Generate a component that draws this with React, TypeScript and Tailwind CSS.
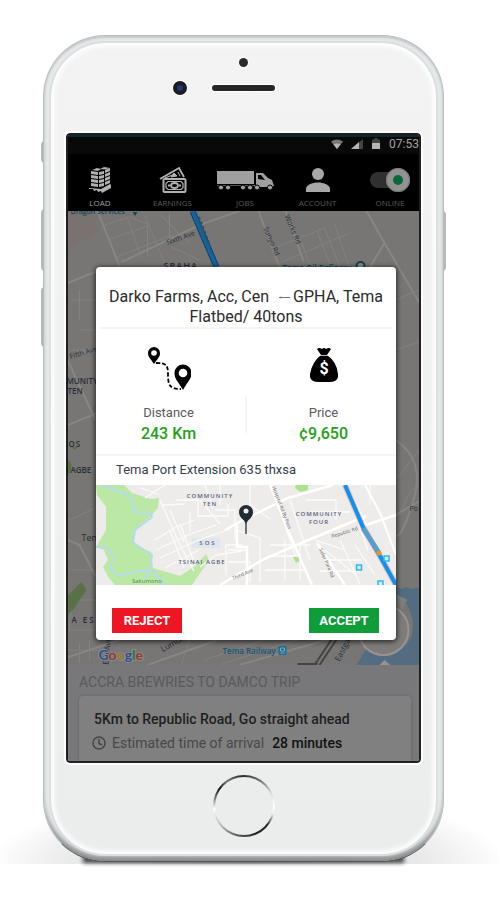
import type { ReactNode } from "react";

function LoadIcon() {
  return (
    <svg width="24" height="26" viewBox="0 0 24 26" fill="#b0b0b0" aria-hidden="true">
      {[3, 7, 11, 15].map((y) => (
        <g key={y}>
          <path d={`M3 ${y + 1}l7 1v3l-7 -1z`} />
          <path d={`M11 ${y + 2}l5 -1v3l-5 1z`} />
          <path d={`M17 ${y}l5 -2v3l-5 2z`} />
        </g>
      ))}
      <path d="M4 3l5-2 4 1-3 2zM12 2l4-2 6 1-5 1.600z" />
      <path d="M1 21l12 1 9-5 1 1v3l-9 5-1-2-3 1-1-2-3 1-1-2-4 0z" />
    </svg>
  );
}

function EarningsIcon() {
  return (
    <svg width="28" height="26" viewBox="0 0 28 26" fill="none" stroke="#b0b0b0" aria-hidden="true">
      <path d="M1 12L20 1l5 9" strokeWidth="1.800" />
      <path d="M6 11l10-4" strokeWidth="1.300" />
      <path d="M12 10l3-4 3 3zM19 5l2 4" fill="#b0b0b0" />
      <rect x="4.500" y="12" width="22" height="13" rx="1" strokeWidth="2" />
      <path d="M9 14.500h13l2 2v4l-2 2H9l-2-2v-4z" strokeWidth="1.200" />
      <ellipse cx="15.500" cy="18.500" rx="3.500" ry="2.500" strokeWidth="1.800" />
      <path d="M9 18.500h2M20 18.500h2" strokeWidth="2" />
    </svg>
  );
}

function TruckIcon() {
  return (
    <svg width="58" height="22" viewBox="0 0 58 22" fill="#a0a0a0" aria-hidden="true">
      <path d="M1 2h37v13H1z" />
      <path d="M1 16h37v1H1z" fill="#555" />
      <path d="M40 4h7l5 5 4 2 2 6-4 1H40zM42 6v4l7 1-4-5z" fillRule="evenodd" />
      <path d="M38 16h19v2H38z" />
      {[5, 12, 27, 34, 41, 54].map((x) => (
        <circle key={x} cx={x} cy="18.500" r="2.500" stroke="#000" />
      ))}
    </svg>
  );
}

function AccountIcon() {
  return (
    <svg width="24" height="26" viewBox="0 0 24 26" fill="#a8a8a8" aria-hidden="true">
      <circle cx="12" cy="7" r="6" />
      <path d="M0 25v-3c0-4 6-6.500 12-6.500S24 18 24 22v3z" />
    </svg>
  );
}

function StatusBar() {
  return (
    <div className="flex h-[19px] items-center justify-end border-t-2 border-[#0c2a2d] bg-[#090909] pb-1 text-[12px] leading-3 text-[#a3a3a3]">
      <svg className="mr-2" width="12" height="10" viewBox="0 0 12 10" aria-hidden="true">
        <path d="M0 2.500Q6-1.500 12 2.500L6 10z" fill="#777" />
        <path d="M2.500 5.500Q6 3.500 9.500 5.500L6 10z" fill="#b5b5b5" />
      </svg>
      <svg className="mr-[9px]" width="12" height="10" viewBox="0 0 12 10" aria-hidden="true">
        <path d="M0 10L12 0v10z" fill="#444" />
        <path d="M0 10l8-7v7z" fill="#b5b5b5" />
      </svg>
      <svg className="mr-[9px]" width="8" height="11" viewBox="0 0 8 11" aria-hidden="true">
        <path d="M0 1.500h2.500V0h3v1.500H8V11H0z" fill="#444" />
        <path d="M0 5h8v6H0z" fill="#b5b5b5" />
      </svg>
      <span>07:53</span>
    </div>
  );
}

function NavItem({ label, active, children }: { label: string; active?: boolean; children: ReactNode }) {
  return (
    <button type="button" className="flex w-[58px] flex-col items-center">
      <span className="flex h-[28px] items-center">{children}</span>
      <span className={`mt-1 text-[8px] leading-[10px] ${active ? "text-[#a0a0a0]" : "text-[#5c5c5c]"}`}>{label}</span>
    </button>
  );
}

function NavBar() {
  return (
    <nav className="flex h-[57px] items-start justify-between bg-black pt-3 pl-[3px] font-['Open_Sans',sans-serif]">
      <NavItem label="LOAD" active>
        <LoadIcon />
      </NavItem>
      <NavItem label="EARNINGS">
        <EarningsIcon />
      </NavItem>
      <NavItem label="JOBS">
        <TruckIcon />
      </NavItem>
      <NavItem label="ACCOUNT">
        <AccountIcon />
      </NavItem>
      <label className="flex w-[58px] flex-col items-center">
        <span className="flex h-[28px] items-center">
          <input
            type="checkbox"
            role="switch"
            defaultChecked
            className="flex h-4 w-[40px] appearance-none items-center justify-end rounded-full bg-[#303030] before:block before:size-6 before:rounded-full before:border-[7px] before:border-[#929292] before:bg-[#066a38] before:outline-1 before:-outline-offset-1 before:outline-[#757575]"
          />
        </span>
        <span className="mt-1 text-[8px] leading-[10px] text-[#5c5c5c]">ONLINE</span>
      </label>
    </nav>
  );
}

function CityMap() {
  return (
    <svg
      className="block h-[454px] w-full"
      viewBox="68 211 352 454"
      preserveAspectRatio="xMidYMid slice"
      fontFamily="'Open Sans', sans-serif"
      role="img"
      aria-label="Map of Tema"
    >
      <path d="M60 200h370v480H60z" fill="#777674" />
      <path d="M68 211h25l6 20-31 20z" fill="#7a7270" />
      <g fill="none" stroke="#838281" strokeWidth="1">
        <path d="M105 225l25-8 20 8M108 240l40-14v30M128 218l14 40M115 258l60-24M145 215l20 48M160 214l30 30M170 212v34l30 14M80 330h16v22H76M72 300h24M80 290v30M70 350h26M70 520l26-12M72 600h24v30H70z" />
        <path d="M275 248l50-20 15 38M282 262l66-28M300 238l12 30M318 232l14 36M335 224l14 42M396 300l24-10M396 350l24-8M396 480l24-30M396 520l16-30 8-4M70 570h26v24M120 645l-10 20M190 640l-8 25M205 660l60-20M220 665l80-26M80 643v20M90 640v20M68 650h40" />
      </g>
      <g fill="none" stroke="#868684" strokeWidth="2">
        <path d="M98 211l22 55M122 262l78-37 40-14M68 283l30-12M259 211l14 38 8 20M286 211l18 50M367 211l18 32-15 25M385 243l35 60M68 360l28 60M68 425l30-12M68 540l12 5 18 35M396 440q30 20 18 60t-18 35M396 515l24-14M60 660l60-20M148 665l70-25M240 665l90-26" />
      </g>
      <path d="M193 211l24 56" stroke="#1c3f64" strokeWidth="6" />
      <path d="M193 211l24 56" stroke="#0f659d" strokeWidth="4" />
      <path d="M199 217l10 26" stroke="#31505e" strokeWidth="3" strokeDasharray="3 2" />
      <path d="M338 638l-18 27M333 638l-18 27M298 664h20" stroke="#444" strokeWidth="2" fill="none" />
      <path d="M396 586l5 3 6-2 5 2 8-2v80H356l12-20q20 14 38-2 14-14 2-40l-12-8z" fill="#536c80" />
      <path d="M396 594l12 6-6 10z" fill="#7e7e7c" />
      <circle cx="384" cy="630" r="25" fill="#7d7c7a" stroke="#99938d" strokeWidth="2" />
      <path d="M380 665l5-5 6 5z" fill="#9a9184" />
      <path d="M68 596l14-14 5 8-12 18-7 7z" fill="#587146" />
      <path d="M68 459l4 5-1 8-3 3zM72 447h6l-3 3z" fill="#547144" />
      <g fill="#272f3c" fontSize="8">
        <text x="164" y="269" fontWeight="600" fontSize="9" letterSpacing="1">SRAHA</text>
        <text x="168" y="245" transform="rotate(-20 168 245)" fontSize="7">Sixth Ave</text>
        <text x="264" y="228" transform="rotate(67 264 228)" fontSize="7">Sunyo Rd</text>
        <text x="285" y="216" transform="rotate(67 285 216)" fontSize="7">Works Rd</text>
        <text x="71" y="359" transform="rotate(-17 71 359)" fontSize="7">Fifth Ave</text>
        <text x="67" y="384" fontWeight="600">MUNITY</text>
        <text x="68" y="394" fontWeight="600">TEN</text>
        <text x="69" y="447" letterSpacing="1" fontWeight="600">OS</text>
        <text x="71" y="473" fontWeight="600">AGBE</text>
        <text x="82" y="541" fontSize="9">Tema</text>
        <text x="72" y="623" letterSpacing="2" fontWeight="600">A ES</text>
        <text x="410" y="511" fontSize="7">Po</text>
        <text x="163" y="652" transform="rotate(-28 163 652)">Lumumba Rd</text>
        <text x="340" y="662" transform="rotate(-63 340 662)">Eastgate</text>
        <text x="109" y="665" transform="rotate(-85 109 665)">Eth Ave</text>
      </g>
      <g fill="#0b4959" fontWeight="600">
        <text x="71" y="214" fontSize="7">Dragon Services</text>
        <path d="M133 212h5l-2.500 4z" />
        <text x="283" y="271" fontSize="8">Tema Oil Refinery</text>
        <circle cx="361" cy="266" r="4" fill="#8a8f90" stroke="#173d50" strokeWidth="2" />
        <text x="223" y="654" fontSize="8" fill="#14597c">Tema Railway</text>
        <rect x="279" y="646" width="8" height="9" rx="1" fill="#1a6f9c" />
        <path d="M281 648h4v3h-4zM281 653h4" fill="none" stroke="#8aa3ad" />
      </g>
      <text x="99" y="660" fontFamily="Lato, sans-serif" fontSize="14" fontWeight="700" stroke="#8a8a8a" strokeWidth="2" paintOrder="stroke">
        <tspan fill="#2d4f96">G</tspan>
        <tspan fill="#95372f">o</tspan>
        <tspan fill="#92772a">o</tspan>
        <tspan fill="#2d4f96">g</tspan>
        <tspan fill="#2b7543">l</tspan>
        <tspan fill="#95372f">e</tspan>
      </text>
    </svg>
  );
}

function DestinationMap() {
  return (
    <svg
      className="block h-[100px] w-full"
      viewBox="96 485 300 100"
      preserveAspectRatio="xMidYMid slice"
      fontFamily="'Open Sans', sans-serif"
      role="img"
      aria-label="Map of the destination"
    >
      <path d="M90 480h310v110H90z" fill="#eeecea" />
      <path
        d="M96 485H124L132 493L151 499L159 498L158 508L150 517L134 530L133 540L136 545L151 552L153 568L180 576L195 566L206 554L209 560L192 585H115L108 577L103 567L108 560L104 550L96 547L106 530V507L97 495Z"
        fill="#bbe8a5"
      />
      <path d="M296 485h12v5l-8 2-5-4zM293 557l5-2 2 6-4 2zM213 545h4l-2 3z" fill="#a9e58f" />
      <path d="M192 538h28v10h-28z" fill="#e0e6ef" />
      <path d="M101 485l20 7 10 6 4 14 16 1 1 4-17 13-2 12 12 9 7 4-2 14-5 10M96 547l12 1 5 8-2 14 8 6 20-5 14 0 12 14" fill="none" stroke="#b5dceb" strokeWidth="2" />
      <g fill="none" stroke="#fbfbfa" strokeWidth="1.300">
        <path d="M140 488l18 6M145 498l20-13M163 505l22-1M160 500l20 45 14 26M170 510l14 32M155 540l19-12 20-8M156 550l32-15 28-10M160 558l36-17 34-12M165 568l34-18M200 567l16-12 26-4M170 530l14 38M180 524l14 38M190 512v20M200 500l20 24M176 500h22v16h30v-12M215 510h20v30M205 485l8 24M220 485v20M228 550h20M228 562h22v20M250 485v20l20 14M236 530l24 8v44M242 545h-16v30" />
        <path d="M275 495l20 60M290 500l20 60M306 500h30v20M310 512h40M315 540l30 10M325 550l30 24M340 540l20 44M355 545l20 30M270 545h40M268 556h30M265 570h40M285 540v40M300 545v35M350 500l18 50M370 485v20M325 560h36M320 571h40" />
      </g>
      <g fill="none" stroke="#fff" strokeWidth="2.500">
        <path d="M225 530l18-10 45-22 45-13M237 525v22h10v38M270 485l20 50 22 50M220 585l44-26 42-18 60-25M317 543l20 30 8 12M346 485l20 40 30-10" />
        <path d="M365 485l15 28 16 42" strokeWidth="2" />
      </g>
      <path d="M345 485l18 42 17 29 16 29" fill="none" stroke="#eb9562" strokeWidth="6" opacity=".5" />
      <path d="M345 485l18 42 17 29 16 29" fill="none" stroke="#0d91f5" strokeWidth="4" />
      <path d="M363 528l16 25" stroke="#579ed0" strokeWidth="5" />
      <circle cx="379" cy="553" r="2.500" fill="#e29730" />
      <g fill="#c8f1ff" stroke="#2fb4f5" strokeWidth="1.500">
        <rect x="356.500" y="565" width="5" height="5" />
        <rect x="384" y="556" width="5" height="5" />
        <rect x="378" y="581" width="5" height="5" />
      </g>
      <g fill="#53627a" fontSize="6" fontWeight="600" textAnchor="middle" letterSpacing="1">
        <text x="210" y="498">COMMUNITY</text>
        <text x="210" y="506">TEN</text>
        <text x="208" y="545" letterSpacing="2">SOS</text>
        <text x="202" y="564">TSINAI AGBE</text>
        <text x="319" y="516">COMMUNITY</text>
        <text x="319" y="524">FOUR</text>
      </g>
      <g fill="#666" fontSize="5">
        <text x="132" y="583" fontSize="6" fill="#56845a">Sakumono</text>
        <text x="233" y="580" transform="rotate(-22 233 580)">Third Ave</text>
        <text x="332" y="538" transform="rotate(-17 332 538)">Republic Rd</text>
        <text x="319" y="549" transform="rotate(67 319 549)">Safer Park Rd</text>
        <text x="272" y="487" transform="rotate(69 272 487)">Hospital Rd By Pass</text>
      </g>
      <path d="M246 534v-16" stroke="#26323a" strokeWidth="1.300" />
      <path d="M246 524c-2-5-7-6-7-12a7 7 0 0 1 14 0c0 6-5 7-7 12z" fill="#202c34" />
      <circle cx="246" cy="511" r="2.500" fill="#eee" />
    </svg>
  );
}

function RouteIcon() {
  return (
    <svg width="44" height="46" viewBox="147 345 44 46" aria-hidden="true">
      <path d="M154 364c-4-6-6-7-6-11a6 6 0 0 1 12 0c0 4-2 5-6 11zM183 390c-5-9-8.500-11-8.500-17a8.500 8.500 0 0 1 17 0c0 6-3.500 8-8.500 17z" />
      <circle cx="154" cy="353" r="2.800" fill="#fff" />
      <circle cx="183" cy="373" r="4.300" fill="#fff" />
      <path d="M156 363c10 0 12 2 12 11 0 12 2 15 13 15" fill="none" stroke="#000" strokeWidth="1.800" strokeDasharray="4 2" />
    </svg>
  );
}

function MoneyBagIcon() {
  return (
    <svg width="28" height="42" viewBox="0 0 28 42" aria-hidden="true">
      <path d="M7 2q2-2 5 0 2-2 4 0 3-2 5 0l-4 6q10 7 11 19 1 8-9 8H9Q-1 35 0 27 2 15 11 8z" />
      <path d="M10 8.500h8" stroke="#fff" strokeWidth=".7" />
      <text x="14" y="27" textAnchor="middle" fill="#fff" fontFamily="Roboto, sans-serif" fontSize="16" fontWeight="700">
        $
      </text>
    </svg>
  );
}

function Stat({ label, value, icon }: { label: string; value: string; icon: ReactNode }) {
  return (
    <div className="flex flex-1 flex-col items-center">
      <div className="flex h-[48px] items-center">{icon}</div>
      <p className="mt-[11px] text-[13px] leading-5 text-[#575b62]">{label}</p>
      <p className="text-[16px] leading-[22px] font-medium text-[#22a016]">{value}</p>
    </div>
  );
}

function OfferDialog() {
  return (
    <section
      role="dialog"
      aria-label="Trip offer"
      className="absolute top-[132px] right-[23px] left-[28px] overflow-hidden rounded-[4px] bg-white shadow-[0_1px_5px_1px_rgba(0,0,0,0.65)]"
    >
      <h1 className="mx-1 border-b-2 border-[#f4f4f4] pt-5 text-center text-[16px] leading-5 text-[#2b2b2b]">
        <span className="inline-flex items-center">
          Darko Farms, Acc, Cen
          <svg className="mr-[3px] ml-[10px]" width="11" height="5" viewBox="0 0 11 5" fill="none" stroke="#777" aria-hidden="true">
            <path d="M0 2.500h11M2 1.500v2" />
          </svg>
          GPHA, Tema
        </span>
        <br />
        Flatbed/ 40tons
      </h1>
      <div className="flex items-end border-b-2 border-[#f5f5f5] pt-[15px] pb-[9px]">
        <Stat label="Distance" value="243 Km" icon={<RouteIcon />} />
        <div className="mx-1 mb-3 h-[38px] w-0.5 bg-[#f5f5f5]" />
        <Stat label="Price" value="¢9,650" icon={<MoneyBagIcon />} />
      </div>
      <p className="px-5 pt-1 pb-[5px] text-[13px] leading-5 text-[#36404a]">Tema Port Extension 635 thxsa</p>
      <DestinationMap />
      <div className="flex justify-between pt-[23px] pr-[17px] pb-[7px] pl-4 text-[13px] leading-[25px] font-bold text-white">
        <button type="button" className="w-[70px] bg-[#ed1622]">
          REJECT
        </button>
        <button type="button" className="w-[70px] bg-[#0e9d38]">
          ACCEPT
        </button>
      </div>
    </section>
  );
}

function TripPanel() {
  return (
    <section className="h-[96px] overflow-hidden bg-[#78787a] pt-[7px] pr-2 pl-[11px]">
      <h2 className="text-[14px] leading-5 text-[#5a5a5c]">ACCRA BREWRIES TO DAMCO TRIP</h2>
      <div className="mt-1 rounded-t-sm bg-[#808080] pt-[13px] pb-4 pl-[15px] text-[14px] shadow-[0_0_3px_rgba(0,0,0,0.2)]">
        <p className="leading-5 font-medium text-[#1f1f1f]">5Km to Republic Road, Go straight ahead</p>
        <p className="mt-1 flex items-center leading-5 text-[#484848]">
          <svg className="mr-[6px] -ml-0.5" width="14" height="14" viewBox="0 0 14 14" fill="none" stroke="#454545" strokeWidth="1.500" aria-hidden="true">
            <circle cx="7" cy="7" r="6" />
            <path d="M7 3v4.500l3 1.500" />
          </svg>
          Estimated time of arrival
          <strong className="ml-2 font-medium text-[#111]">28 minutes</strong>
        </p>
      </div>
    </section>
  );
}

function Earpiece() {
  return (
    <div className="flex h-[98px] flex-col items-center pt-[23px]">
      <span className="size-[9px] rounded-full bg-[#2c2c30] ring-1 ring-white" />
      <div className="mt-[14px] grid w-full grid-cols-[1fr_auto_1fr] items-center">
        <span className="mr-[25px] size-[14px] justify-self-end rounded-full border-4 border-[#1b1b24] bg-[#26366f] ring-1 ring-white" />
        <span className="h-[6px] w-[63px] rounded-full bg-[#262626] ring-1 ring-white" />
      </div>
    </div>
  );
}

function HomeButton() {
  return (
    <div className="flex h-[97px] items-start justify-center pt-3">
      <button
        type="button"
        aria-label="Home"
        className="size-[62px] rounded-full bg-[conic-gradient(from_0deg,#333_0deg,#777_35deg,#ddd_65deg,#fff_90deg,#eee_105deg,#222_130deg,#222_155deg,#555_190deg,#bbb_230deg,#fff_265deg,#777_285deg,#111_305deg,#777_325deg,#222_360deg)] p-0.5"
      >
        <span className="block size-full rounded-full bg-[#ebeded]" />
      </button>
    </div>
  );
}

export default function App() {
  return (
    <main className="overflow-hidden bg-white pt-[35px] pr-[11px] pb-[38px] font-[Roboto,sans-serif]">
      <div className="relative mx-auto w-full max-w-[401px]">
        <div className="absolute right-[-54px] bottom-[-2px] left-[-43px] h-[80px] bg-[radial-gradient(ellipse_52%_90%_at_50%_100%,#cccccc_0%,#ebebeb_70%,#ffffff_100%)]" />
        <div className="absolute inset-x-[40px] bottom-[-1px] h-2 bg-[#444] blur-[2px]" />
        <div className="absolute top-[106px] -left-0.5 h-[22px] w-1 rounded-l-sm bg-[#b5b8b9]" />
        <div className="absolute top-[174px] -left-0.5 h-[62px] w-1 rounded-l-sm bg-[#b5b8b9]" />
        <div className="absolute top-[252px] -left-0.5 h-[60px] w-1 rounded-l-sm bg-[#b5b8b9]" />
        <div className="absolute top-[176px] -right-0.5 h-[60px] w-1 rounded-r-sm bg-[#b5b8b9]" />
        <div className="relative rounded-[62px] border border-[#b9bcbd] border-b-[#555] bg-[#e6e9e9] p-[5px] shadow-[inset_0_2px_2px_#c5c8c9,inset_0_-7px_5px_-2px_#888b8c]">
          <div className="rounded-[57px] border-2 border-[#dcdfdf] bg-linear-to-b from-[#f3f3f3] to-[#ebeded] px-[15px] shadow-[inset_0_0_5px_3px_#ffffff]">
            <div className="-mt-2">
              <Earpiece />
            </div>
            <div className="relative overflow-hidden rounded-[4px] border-2 border-[#202020] outline-2 outline-white">
              <StatusBar />
              <NavBar />
              <CityMap />
              <TripPanel />
              <OfferDialog />
            </div>
            <div className="-mb-1.5">
              <HomeButton />
            </div>
          </div>
        </div>
      </div>
    </main>
  );
}
